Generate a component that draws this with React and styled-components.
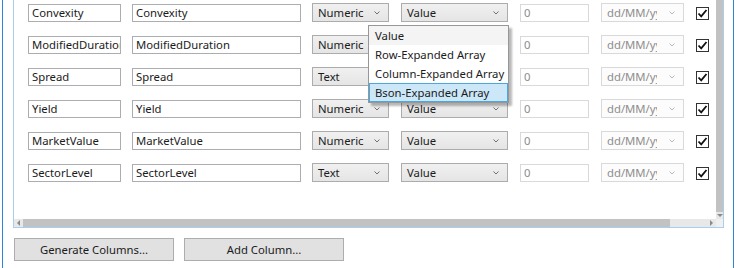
import React from 'react';
import styled, { createGlobalStyle } from 'styled-components';

const GlobalStyle = createGlobalStyle`
  body {
    margin: 0;
    background: #ffffff;
    font-family: "Noto Sans", "Open Sans", sans-serif;
    font-size: 11.3px;
    color: #1b1b1b;
  }
`;

const rows = [
  { name: 'Convexity', header: 'Convexity', type: 'Numeric', open: true },
  { name: 'ModifiedDuration', header: 'ModifiedDuration', type: 'Numeric' },
  { name: 'Spread', header: 'Spread', type: 'Text' },
  { name: 'Yield', header: 'Yield', type: 'Numeric' },
  { name: 'MarketValue', header: 'MarketValue', type: 'Numeric' },
  { name: 'SectorLevel', header: 'SectorLevel', type: 'Text' },
];

const options = ['Value', 'Row-Expanded Array', 'Column-Expanded Array', 'Bson-Expanded Array'];

const Chevron = ({ faded }) => (
  <svg width="6" height="4" viewBox="0 0 6 4">
    <path d="M0.5 0.5 L3 3 L5.5 0.5" fill="none" stroke={faded ? '#b8b8b8' : '#707070'} strokeWidth="1" />
  </svg>
);

const Arrow = ({ dir }) => {
  const d = {
    left: 'M3 0 L3 6 L0 3 Z',
    right: 'M0 0 L0 6 L3 3 Z',
    down: 'M0 0 L6 0 L3 3 Z',
  }[dir];
  return (
    <svg width={dir === 'down' ? 6 : 3} height={dir === 'down' ? 3 : 6} viewBox={dir === 'down' ? '0 0 6 3' : '0 0 3 6'}>
      <path d={d} fill="#8a8a8a" />
    </svg>
  );
};

const Row = ({ row }) => (
  <RowWrap>
    <TextBox>{row.name}</TextBox>
    <TextBox>{row.header}</TextBox>
    <Combo>
      <span>{row.type}</span>
      <Chevron />
    </Combo>
    <ComboCell>
      <Combo>
        <span>Value</span>
        <Chevron />
      </Combo>
      {row.open && (
        <Popup>
          {options.map((o, i) => (
            <PopupItem key={o} current={i === 0} hot={i === 3}>{o}</PopupItem>
          ))}
        </Popup>
      )}
    </ComboCell>
    <TextBox disabled>0</TextBox>
    <Combo disabled>
      <DateText>dd/MM/yyyy</DateText>
      <Chevron faded />
    </Combo>
    <CheckBox>
      <svg width="11" height="11" viewBox="0 0 11 11">
        <path d="M1.5 5.5 L4.2 8.3 L9.5 2" fill="none" stroke="#111" strokeWidth="1.8" />
      </svg>
    </CheckBox>
  </RowWrap>
);

export default function App() {
  return (
    <>
      <GlobalStyle />
      <Page>
        <Frame>
          <Grid>
            <Body>
              <Content>
                {rows.map((r) => (
                  <Row key={r.name} row={r} />
                ))}
              </Content>
              <VScroll>
                <VThumb />
                <ArrowBox><Arrow dir="down" /></ArrowBox>
              </VScroll>
            </Body>
            <HScrollRow>
              <HScroll>
                <HArrowBox><Arrow dir="left" /></HArrowBox>
                <HThumb />
                <HArrowBox><Arrow dir="right" /></HArrowBox>
              </HScroll>
              <Corner />
            </HScrollRow>
          </Grid>
          <Buttons>
            <Button>Generate Columns...</Button>
            <Button>Add Column...</Button>
          </Buttons>
        </Frame>
      </Page>
    </>
  );
}

const Page = styled.div`
  width: 738px;
  height: 268px;
  overflow: hidden;
  padding-left: 2px;
  box-sizing: border-box;
`;

const Frame = styled.div`
  width: 732px;
  height: 268px;
  box-sizing: border-box;
  border-left: 1px solid #2d84d9;
  border-right: 1px solid #2d84d9;
  padding: 0 9px 0 10px;
`;

const Grid = styled.div`
  width: 711px;
  box-sizing: border-box;
  border: 1px solid #a9cfee;
  border-top: none;
  display: flex;
  flex-direction: column;
`;

const Body = styled.div`
  display: flex;
  height: 219px;
`;

const Content = styled.div`
  flex: 1;
  padding: 3px 0 0 14px;
  display: flex;
  flex-direction: column;
  gap: 14px;
`;

const RowWrap = styled.div`
  display: grid;
  grid-template-columns: 104px 180px 89px 119px 81px 95px 13px;
  align-items: center;
  height: 18px;
`;

const TextBox = styled.div`
  box-sizing: border-box;
  height: 18px;
  width: ${(p) => (p.disabled ? '69px' : 'calc(100% - 11px)')};
  border: 1px solid ${(p) => (p.disabled ? '#d9d9d9' : '#abadb3')};
  padding: 0 3px;
  line-height: 16px;
  white-space: nowrap;
  overflow: hidden;
  color: ${(p) => (p.disabled ? '#8d8d8d' : '#1b1b1b')};
  background: #fff;
`;

const ComboCell = styled.div`
  position: relative;
  display: flex;
`;

const Combo = styled.div`
  box-sizing: border-box;
  height: 19px;
  width: calc(100% - 12px);
  border: 1px solid ${(p) => (p.disabled ? '#d9d9d9' : '#acacac')};
  background: ${(p) => (p.disabled ? '#fcfcfc' : 'linear-gradient(#f0f0f0, #e5e5e5)')};
  color: ${(p) => (p.disabled ? '#8d8d8d' : '#1b1b1b')};
  display: flex;
  align-items: center;
  justify-content: space-between;
  padding: 0 8px 0 5px;
  line-height: 17px;
  white-space: nowrap;

  ${ComboCell} & {
    width: 107px;
  }
`;

const DateText = styled.span`
  width: 50px;
  overflow: hidden;
`;

const Popup = styled.div`
  position: absolute;
  left: -33px;
  top: 22px;
  width: 141px;
  box-sizing: border-box;
  border: 1px solid #979797;
  background: #fff;
  box-shadow: 3px 3px 2px rgba(0, 0, 0, 0.28);
  z-index: 2;
`;

const PopupItem = styled.div`
  box-sizing: border-box;
  height: 19px;
  line-height: 17px;
  padding: 0 5px;
  border: 1px solid ${(p) => (p.hot ? '#4aa8de' : 'transparent')};
  background: ${(p) => (p.hot ? '#cbe7f8' : p.current ? '#f4f4f4' : '#fff')};
  white-space: nowrap;
`;

const CheckBox = styled.div`
  box-sizing: border-box;
  width: 13px;
  height: 13px;
  border: 1px solid #333;
  background: #fff;
  display: flex;
  align-items: center;
  justify-content: center;
  margin-top: 2px;
`;

const VScroll = styled.div`
  width: 7px;
  display: flex;
  flex-direction: column;
  background: #e8e8e8;
`;

const VThumb = styled.div`
  flex: 1;
  background: #c2c2c2;
`;

const ArrowBox = styled.div`
  height: 7px;
  display: flex;
  align-items: center;
  justify-content: center;
`;

const HScrollRow = styled.div`
  display: flex;
  height: 8px;
`;

const HScroll = styled.div`
  flex: 1;
  display: flex;
  align-items: stretch;
  background: #e8e8e8;
`;

const HArrowBox = styled.div`
  width: 9px;
  display: flex;
  align-items: center;
  justify-content: center;
`;

const HThumb = styled.div`
  width: 647px;
  background: #c2c2c2;
  margin-right: auto;
`;

const Corner = styled.div`
  width: 7px;
  background: #f0f0f0;
`;

const Buttons = styled.div`
  display: flex;
  gap: 10px;
  margin-top: 10px;
  padding-left: 1px;
`;

const Button = styled.div`
  box-sizing: border-box;
  width: 160px;
  height: 23px;
  border: 1px solid #adadad;
  background: #e1e1e1;
  display: flex;
  align-items: center;
  justify-content: center;
  color: #1b1b1b;
`;
